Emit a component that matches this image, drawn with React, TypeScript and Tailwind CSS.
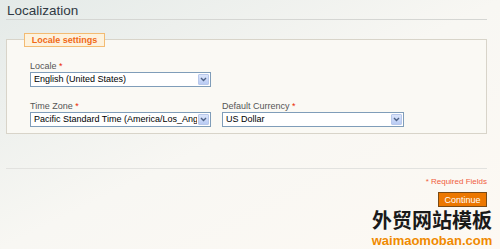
const Req = () => <span className="text-[#eb2a00]"> *</span>;

type FakeSelectProps = { value: string; width: string };

const FakeSelect = ({ value, width }: FakeSelectProps) => (
  <div
    className={`${width} h-[15px] flex items-stretch border border-[#7f9db9] bg-white`}
  >
    <div className="flex-1 min-w-0 overflow-hidden whitespace-nowrap pl-[3px] text-[9px] leading-[13px] text-black">
      {value}
    </div>
    <div className="w-[11px] shrink-0 m-[1px] flex items-center justify-center rounded-[1px] border border-[#b8c8eb] bg-gradient-to-b from-[#dbe5fb] to-[#b9cbf3]">
      <svg width="7" height="5" viewBox="0 0 7 5">
        <path d="M1 1 L3.5 3.5 L6 1" fill="none" stroke="#4d6185" strokeWidth="1.4" />
      </svg>
    </div>
  </div>
);

export default function App() {
  return (
    <div
      className="relative w-[500px] h-[249px] overflow-hidden bg-gradient-to-br from-[#e4eae8] via-[#f8f7f3] to-[#fdf9f3]"
      style={{ fontFamily: "'Liberation Sans', 'Noto Sans CJK SC', sans-serif" }}
    >
      <div className="px-[6px] pr-[13px]">
        <h1 className="pt-[2px] pl-[1px] h-[19px] text-[13.5px] leading-[17px] text-[#303a44]">
          Localization
        </h1>
        <div className="border-t border-[#d5d6d3]" />

        <div className="relative mt-[19px] h-[95px] border border-[#d8d4c9] bg-[#faf9f4]">
          <div className="absolute left-[17px] top-[-7px] h-[14px] w-[81px] whitespace-nowrap border border-[#f3bb72] bg-[#fdf2dd] text-center text-[9px] font-bold leading-[12px] text-[#f06a17]">
            Locale settings
          </div>

          <div className="pl-[23px] pt-[20px] flex flex-col">
            <div className="text-[9px] leading-[12px] text-[#555]">
              Locale<Req />
            </div>
            <FakeSelect value="English (United States)" width="w-[181px]" />

            <div className="mt-[13px] flex gap-[11px]">
              <div className="flex flex-col">
                <div className="text-[9px] leading-[12px] text-[#555]">
                  Time Zone<Req />
                </div>
                <FakeSelect
                  value="Pacific Standard Time (America/Los_Angeles)"
                  width="w-[181px]"
                />
              </div>
              <div className="flex flex-col">
                <div className="text-[9px] leading-[12px] text-[#555]">
                  Default Currency<Req />
                </div>
                <FakeSelect value="US Dollar" width="w-[182px]" />
              </div>
            </div>
          </div>
        </div>

        <div className="mt-[34px] border-t border-[#e2e2df]" />
        <div className="mt-[7px] text-right text-[8px] leading-[11px] text-[#f05d40]">
          * Required Fields
        </div>
        <div className="mt-[5px] flex justify-end">
          <button className="h-[15px] w-[49px] border border-[#7a4a14] bg-[#ec7700] text-[9px] leading-[12px] text-white">
            Continue
          </button>
        </div>
      </div>

      <div className="absolute left-[371px] top-[209px] w-[122px] flex flex-col items-center">
        <div className="whitespace-nowrap text-[20px] font-bold leading-[24px] text-[#1a1a1a]">
          外贸网站模板
        </div>
        <div className="whitespace-nowrap text-[13px] font-bold leading-[15px] text-[#f08a00]">
          waimaomoban.com
        </div>
      </div>
    </div>
  );
}
